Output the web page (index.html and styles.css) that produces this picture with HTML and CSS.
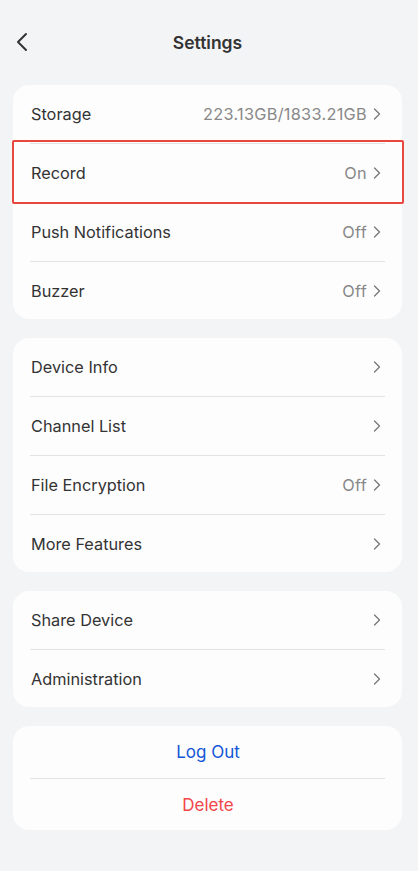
FILE: index.html
```html
<!DOCTYPE html>
<html lang="en">

<head>
    <meta charset="UTF-8">
    <meta name="viewport" content="width=device-width, initial-scale=1.0">
    <title>Settings</title>
    <link rel="stylesheet" href="styles.css">
</head>

<body>
    <div class="header">
        <button class="back">
            <svg width="14" height="20" viewBox="0 0 14 20"><path d="M11 2 L3 10 L11 18" fill="none" stroke="#333" stroke-width="2" stroke-linecap="round" stroke-linejoin="round"/></svg>
        </button>
        <h1>Settings</h1>
    </div>

    <div class="card">
        <div class="row"><span class="label">Storage</span><span class="value">223.13GB/1833.21GB</span><svg class="chev" viewBox="0 0 8 12"><path d="M1.5 1 L6.5 6 L1.5 11"/></svg></div>
        <div class="row highlight"><span class="label">Record</span><span class="value">On</span><svg class="chev" viewBox="0 0 8 12"><path d="M1.5 1 L6.5 6 L1.5 11"/></svg></div>
        <div class="row"><span class="label">Push Notifications</span><span class="value">Off</span><svg class="chev" viewBox="0 0 8 12"><path d="M1.5 1 L6.5 6 L1.5 11"/></svg></div>
        <div class="row"><span class="label">Buzzer</span><span class="value">Off</span><svg class="chev" viewBox="0 0 8 12"><path d="M1.5 1 L6.5 6 L1.5 11"/></svg></div>
    </div>

    <div class="card">
        <div class="row"><span class="label">Device Info</span><svg class="chev" viewBox="0 0 8 12"><path d="M1.5 1 L6.5 6 L1.5 11"/></svg></div>
        <div class="row"><span class="label">Channel List</span><svg class="chev" viewBox="0 0 8 12"><path d="M1.5 1 L6.5 6 L1.5 11"/></svg></div>
        <div class="row"><span class="label">File Encryption</span><span class="value">Off</span><svg class="chev" viewBox="0 0 8 12"><path d="M1.5 1 L6.5 6 L1.5 11"/></svg></div>
        <div class="row"><span class="label">More Features</span><svg class="chev" viewBox="0 0 8 12"><path d="M1.5 1 L6.5 6 L1.5 11"/></svg></div>
    </div>

    <div class="card">
        <div class="row"><span class="label">Share Device</span><svg class="chev" viewBox="0 0 8 12"><path d="M1.5 1 L6.5 6 L1.5 11"/></svg></div>
        <div class="row"><span class="label">Administration</span><svg class="chev" viewBox="0 0 8 12"><path d="M1.5 1 L6.5 6 L1.5 11"/></svg></div>
    </div>

    <div class="card last">
        <div class="row action logout">Log Out</div>
        <div class="row action delete">Delete</div>
    </div>
</body>

</html>
```

FILE: styles.css
```css
body {
    font-family: Inter, "Noto Sans", sans-serif;
    margin: 0;
    padding: 0 16px 0 13px;
    background-color: #f3f4f6;
    color: #333;
}

.header {
    height: 85px;
    display: flex;
    align-items: center;
    justify-content: center;
    position: relative;
}

.header h1 {
    font-size: 17.5px;
    font-weight: 600;
    margin: 0;
    color: #333;
}

.back {
    position: absolute;
    left: 2px;
    top: 32px;
    background: none;
    border: none;
    padding: 0;
}

.card {
    background-color: #fdfdfd;
    border-radius: 16px;
    margin-bottom: 19px;
}

.row {
    position: relative;
    height: 58px;
    margin: 0 17px;
    padding-left: 1px;
    display: flex;
    align-items: center;
    border-bottom: 1px solid #e3e3e3;
    font-size: 16.3px;
}

.row:last-child {
    height: 57px;
    border-bottom: none;
}

.label {
    flex: 1;
}

.value {
    color: #888;
    margin-right: 6px;
    letter-spacing: 0.3px;
}

.chev {
    width: 8px;
    height: 12px;
    margin-right: 4px;
    fill: none;
    stroke: #777;
    stroke-width: 1.3;
    stroke-linecap: round;
    stroke-linejoin: round;
}

.highlight::after {
    content: "";
    position: absolute;
    top: -4px;
    bottom: -2px;
    left: -18px;
    right: -19px;
    border: 2px solid #e8473e;
    border-radius: 2px;
}

.action,
.action:last-child {
    height: 52px;
    justify-content: center;
    font-size: 17px;
}

.action:last-child {
    height: 51px;
}

.logout {
    color: #1256d6;
}

.delete {
    color: #f2454a;
}
```
